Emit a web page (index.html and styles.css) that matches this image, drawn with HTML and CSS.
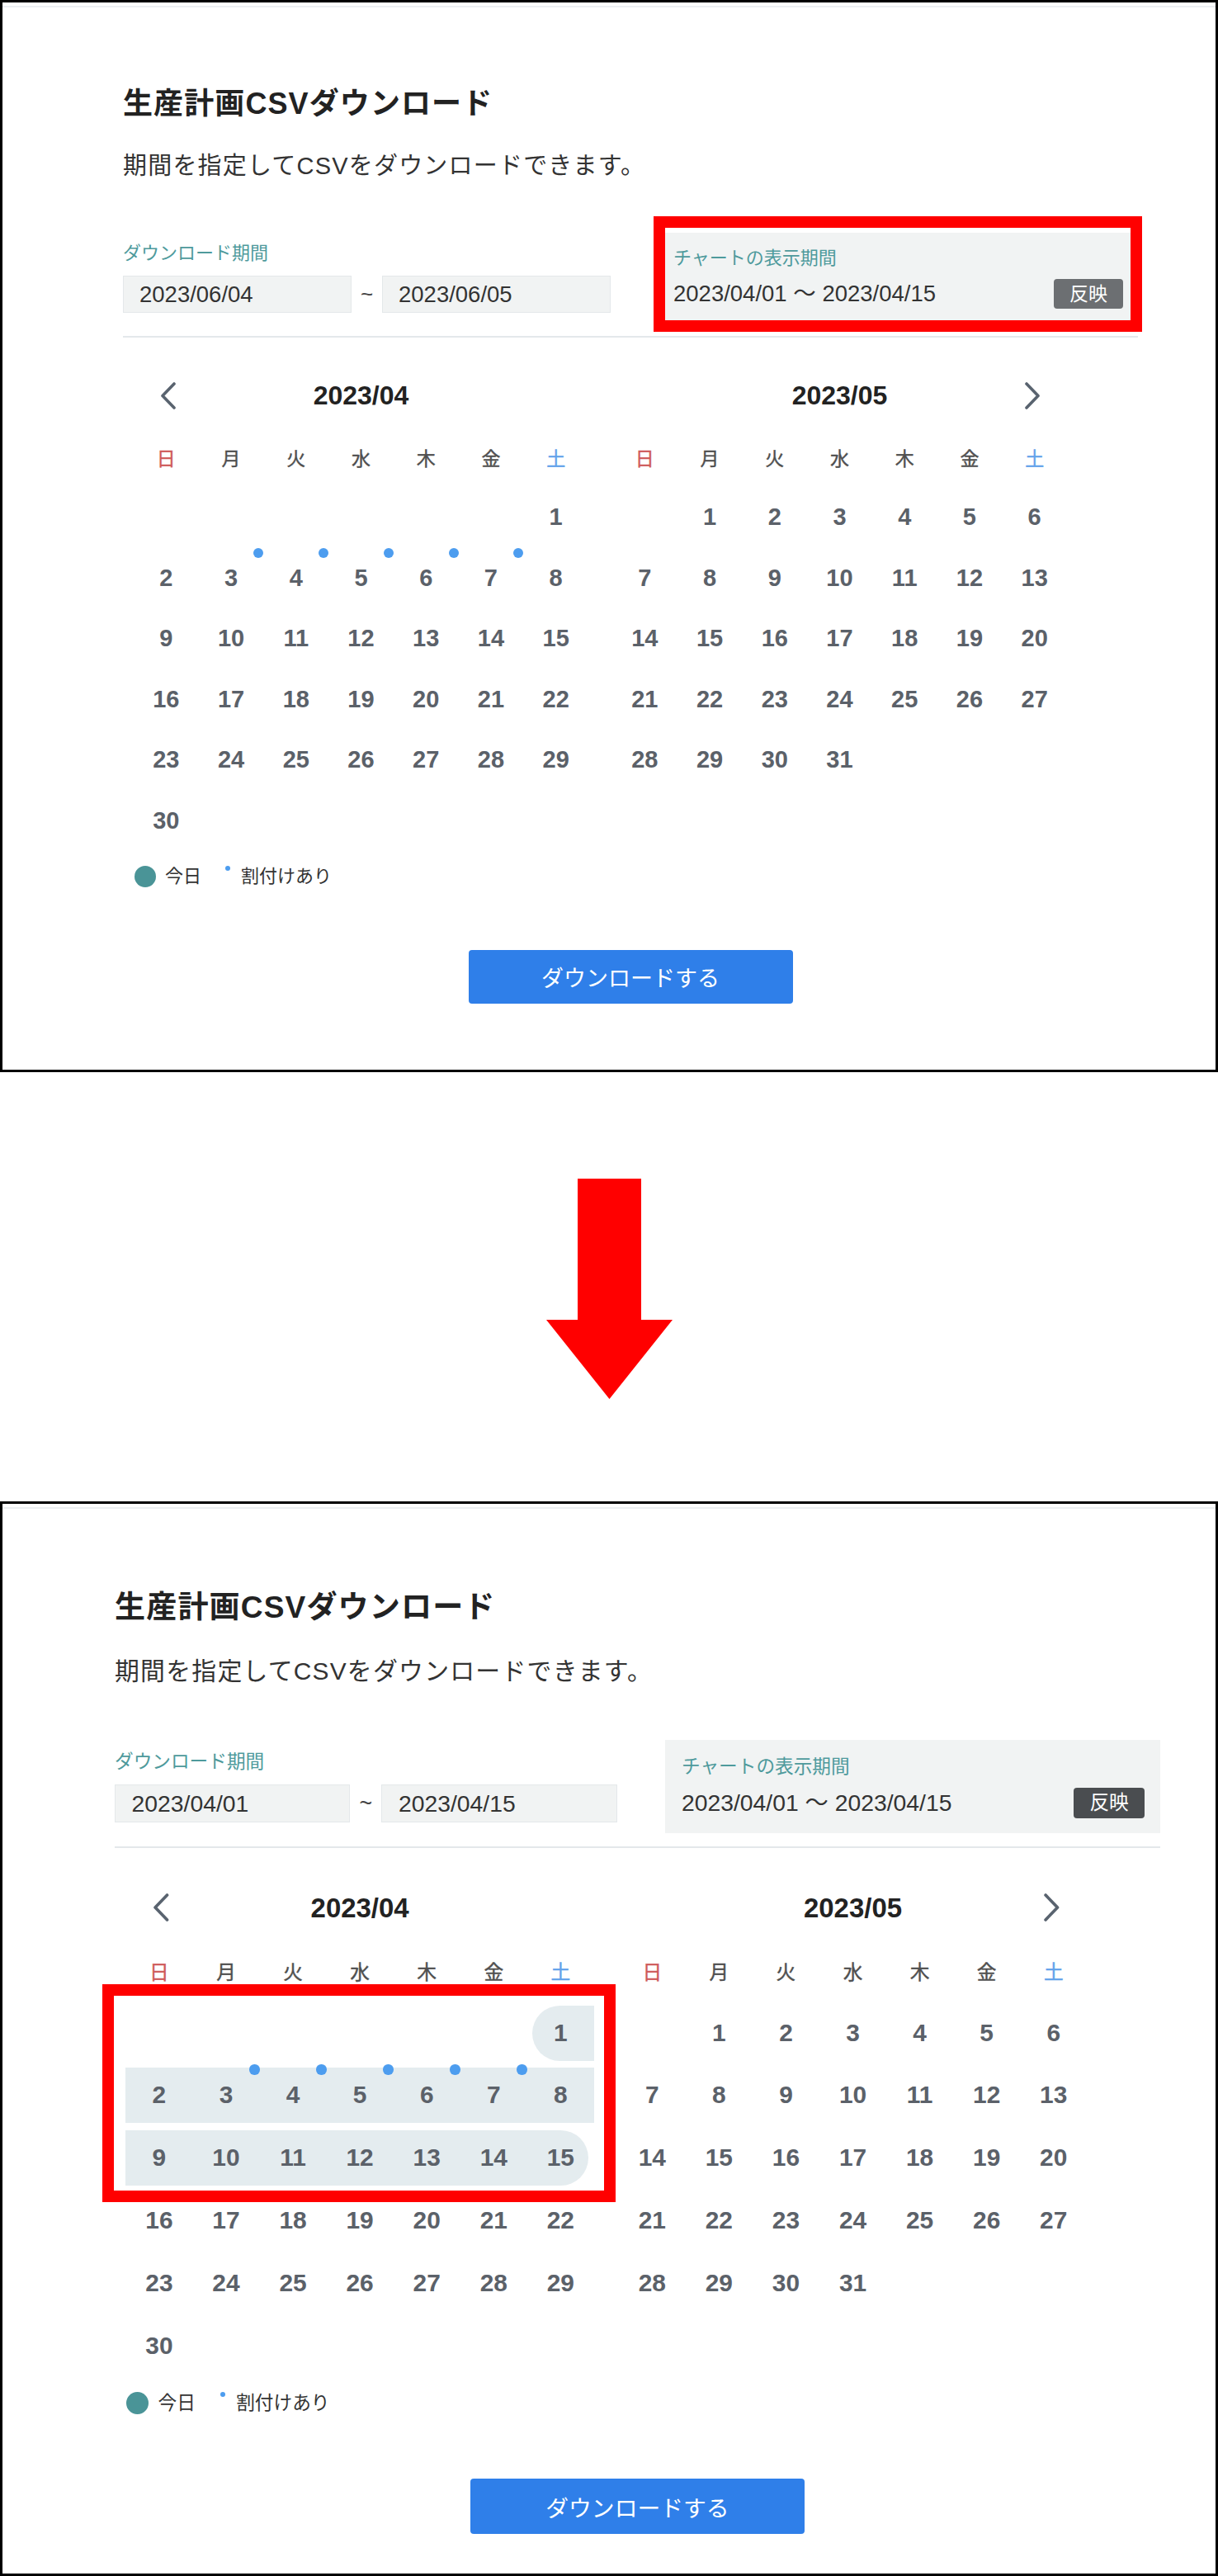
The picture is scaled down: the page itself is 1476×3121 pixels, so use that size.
FILE: index.html
```html
<!DOCTYPE html>
<html lang="ja">
<head>
<meta charset="utf-8">
<title>生産計画CSVダウンロード</title>
<link rel="stylesheet" href="styles.css">
</head>
<body>
<section class="panel panel--before">
  <div class="ui">
    <h1 class="title">生産計画CSVダウンロード</h1>
    <p class="lead">期間を指定してCSVをダウンロードできます。</p>
    <div class="period-row">
      <div class="period">
        <div class="label">ダウンロード期間</div>
        <div class="inputs">
          <div class="input">2023/06/04</div>
          <span class="tilde">~</span>
          <div class="input">2023/06/05</div>
        </div>
      </div>
      <div class="chart">
        <div class="label">チャートの表示期間</div>
        <div class="chart-row">
          <span class="chart-range">2023/04/01 〜 2023/04/15</span>
          <button class="apply">反映</button>
        </div>
        <div class="mark mark--chart"></div>
      </div>
    </div>
    <hr class="divider">
    <div class="calendars">
      <div class="month">
        <div class="month-head">
          <svg class="nav" viewBox="0 0 20 33"><polyline points="17,2 3,16.5 17,31" fill="none" stroke="#59636f" stroke-width="3.6" stroke-linecap="round" stroke-linejoin="round"/></svg>
          <span class="month-title">2023/04</span>
          <span class="nav"></span>
        </div>
        <div class="weekdays"><span class="sun">日</span><span>月</span><span>火</span><span>水</span><span>木</span><span>金</span><span class="sat">土</span></div>
        <div class="days">
          <div class="day"></div><div class="day"></div><div class="day"></div><div class="day"></div><div class="day"></div><div class="day"></div><div class="day">1</div>
          <div class="day">2</div><div class="day">3<i class="dot"></i></div><div class="day">4<i class="dot"></i></div><div class="day">5<i class="dot"></i></div><div class="day">6<i class="dot"></i></div><div class="day">7<i class="dot"></i></div><div class="day">8</div>
          <div class="day">9</div><div class="day">10</div><div class="day">11</div><div class="day">12</div><div class="day">13</div><div class="day">14</div><div class="day">15</div>
          <div class="day">16</div><div class="day">17</div><div class="day">18</div><div class="day">19</div><div class="day">20</div><div class="day">21</div><div class="day">22</div>
          <div class="day">23</div><div class="day">24</div><div class="day">25</div><div class="day">26</div><div class="day">27</div><div class="day">28</div><div class="day">29</div>
          <div class="day">30</div>
        </div>
      </div>
      <div class="month">
        <div class="month-head">
          <span class="nav"></span>
          <span class="month-title">2023/05</span>
          <svg class="nav" viewBox="0 0 20 33"><polyline points="3,2 17,16.5 3,31" fill="none" stroke="#59636f" stroke-width="3.6" stroke-linecap="round" stroke-linejoin="round"/></svg>
        </div>
        <div class="weekdays"><span class="sun">日</span><span>月</span><span>火</span><span>水</span><span>木</span><span>金</span><span class="sat">土</span></div>
        <div class="days">
          <div class="day"></div><div class="day">1</div><div class="day">2</div><div class="day">3</div><div class="day">4</div><div class="day">5</div><div class="day">6</div>
          <div class="day">7</div><div class="day">8</div><div class="day">9</div><div class="day">10</div><div class="day">11</div><div class="day">12</div><div class="day">13</div>
          <div class="day">14</div><div class="day">15</div><div class="day">16</div><div class="day">17</div><div class="day">18</div><div class="day">19</div><div class="day">20</div>
          <div class="day">21</div><div class="day">22</div><div class="day">23</div><div class="day">24</div><div class="day">25</div><div class="day">26</div><div class="day">27</div>
          <div class="day">28</div><div class="day">29</div><div class="day">30</div><div class="day">31</div>
        </div>
      </div>
    </div>
    <div class="legend">
      <span class="legend-today">今日</span>
      <span class="legend-assign">割付けあり</span>
    </div>
    <div class="actions"><button class="download">ダウンロードする</button></div>
  </div>
</section>

<div class="arrow">
  <svg class="arrow-svg" viewBox="0 0 153 267"><polygon points="38,0 115,0 115,171 153,171 76.5,267 0,171 38,171" fill="#ff0000"/></svg>
</div>

<section class="panel panel--after">
  <div class="ui">
    <h1 class="title">生産計画CSVダウンロード</h1>
    <p class="lead">期間を指定してCSVをダウンロードできます。</p>
    <div class="period-row">
      <div class="period">
        <div class="label">ダウンロード期間</div>
        <div class="inputs">
          <div class="input">2023/04/01</div>
          <span class="tilde">~</span>
          <div class="input">2023/04/15</div>
        </div>
      </div>
      <div class="chart">
        <div class="label">チャートの表示期間</div>
        <div class="chart-row">
          <span class="chart-range">2023/04/01 〜 2023/04/15</span>
          <button class="apply">反映</button>
        </div>
      </div>
    </div>
    <hr class="divider">
    <div class="calendars">
      <div class="month">
        <div class="month-head">
          <svg class="nav" viewBox="0 0 20 33"><polyline points="17,2 3,16.5 17,31" fill="none" stroke="#59636f" stroke-width="3.6" stroke-linecap="round" stroke-linejoin="round"/></svg>
          <span class="month-title">2023/04</span>
          <span class="nav"></span>
        </div>
        <div class="weekdays"><span class="sun">日</span><span>月</span><span>火</span><span>水</span><span>木</span><span>金</span><span class="sat">土</span></div>
        <div class="days">
          <div class="day"></div><div class="day"></div><div class="day"></div><div class="day"></div><div class="day"></div><div class="day"></div><div class="day in start">1</div>
          <div class="day in">2</div><div class="day in">3<i class="dot"></i></div><div class="day in">4<i class="dot"></i></div><div class="day in">5<i class="dot"></i></div><div class="day in">6<i class="dot"></i></div><div class="day in">7<i class="dot"></i></div><div class="day in">8</div>
          <div class="day in">9</div><div class="day in">10</div><div class="day in">11</div><div class="day in">12</div><div class="day in">13</div><div class="day in">14</div><div class="day in end">15</div>
          <div class="day">16</div><div class="day">17</div><div class="day">18</div><div class="day">19</div><div class="day">20</div><div class="day">21</div><div class="day">22</div>
          <div class="day">23</div><div class="day">24</div><div class="day">25</div><div class="day">26</div><div class="day">27</div><div class="day">28</div><div class="day">29</div>
          <div class="day">30</div>
          <div class="mark mark--range"></div>
        </div>
      </div>
      <div class="month">
        <div class="month-head">
          <span class="nav"></span>
          <span class="month-title">2023/05</span>
          <svg class="nav" viewBox="0 0 20 33"><polyline points="3,2 17,16.5 3,31" fill="none" stroke="#59636f" stroke-width="3.6" stroke-linecap="round" stroke-linejoin="round"/></svg>
        </div>
        <div class="weekdays"><span class="sun">日</span><span>月</span><span>火</span><span>水</span><span>木</span><span>金</span><span class="sat">土</span></div>
        <div class="days">
          <div class="day"></div><div class="day">1</div><div class="day">2</div><div class="day">3</div><div class="day">4</div><div class="day">5</div><div class="day">6</div>
          <div class="day">7</div><div class="day">8</div><div class="day">9</div><div class="day">10</div><div class="day">11</div><div class="day">12</div><div class="day">13</div>
          <div class="day">14</div><div class="day">15</div><div class="day">16</div><div class="day">17</div><div class="day">18</div><div class="day">19</div><div class="day">20</div>
          <div class="day">21</div><div class="day">22</div><div class="day">23</div><div class="day">24</div><div class="day">25</div><div class="day">26</div><div class="day">27</div>
          <div class="day">28</div><div class="day">29</div><div class="day">30</div><div class="day">31</div>
        </div>
      </div>
    </div>
    <div class="legend">
      <span class="legend-today">今日</span>
      <span class="legend-assign">割付けあり</span>
    </div>
    <div class="actions"><button class="download">ダウンロードする</button></div>
  </div>
</section>
</body>
</html>
```

FILE: styles.css
```css
* { box-sizing: border-box; }

html, body {
  margin: 0;
  padding: 0;
  background: #fff;
}

body {
  width: 1476px;
  font-family: "Liberation Sans", "Noto Sans CJK JP", sans-serif;
  color: #333;
}

.panel {
  position: relative;
  height: 1299px;
  border: 3px solid #000;
  padding: 101px 0 0 146px;
  box-shadow: inset 0 4px 0 #fff, inset 0 6px 0 #eceff2;
}

.panel--after {
  height: 1302px;
  padding: 103px 0 0 136px;
}

.ui {
  width: 1230px;
}

.panel--after .ui {
  zoom: 1.03;
}

.title {
  margin: 0;
  font-size: 36px;
  line-height: 44px;
  font-weight: 700;
  color: #222;
  letter-spacing: 1.1px;
}

.lead {
  margin: 33px 0 0;
  font-size: 29px;
  line-height: 40px;
  color: #333;
  letter-spacing: 1.2px;
}

.period-row {
  display: flex;
  align-items: flex-start;
  margin-top: 61px;
}

.period {
  width: 591px;
  margin-top: 10px;
}

.label {
  font-size: 22px;
  line-height: 30px;
  color: #4e9a9c;
}

.inputs {
  display: flex;
  align-items: center;
  margin-top: 12px;
}

.input {
  width: 277px;
  height: 45px;
  background: #f1f3f3;
  border: 1px solid #e4e8ea;
  padding-left: 19px;
  font-size: 27.5px;
  line-height: 43px;
  color: #333;
}

.tilde {
  width: 37px;
  text-align: center;
  font-size: 26px;
  color: #444;
}

.chart {
  position: relative;
  flex: 1;
  height: 109px;
  margin-left: 57px;
  background: #f1f3f3;
  padding: 16px 18px 0 19px;
}

.chart-row {
  display: flex;
  align-items: center;
  justify-content: space-between;
  height: 36px;
  margin-top: 10px;
}

.chart-range {
  font-size: 27.5px;
  line-height: 36px;
  color: #333;
}

.apply {
  width: 84px;
  height: 36px;
  padding: 0;
  border: none;
  border-radius: 4px;
  background: #6c6f72;
  color: #fff;
  font-family: inherit;
  font-size: 23px;
  line-height: 36px;
}

.panel--after .apply {
  background: #4a4d50;
}

.divider {
  height: 2px;
  margin: 16px 0 0;
  border: 0;
  background: #e4e8eb;
}

.calendars {
  display: flex;
  align-items: flex-start;
  gap: 29px;
  margin: 50px 0 0 13px;
}

.month {
  width: 551px;
}

.month-head {
  display: flex;
  align-items: center;
  justify-content: space-between;
  height: 40px;
  padding: 0 32px;
}

.nav {
  display: block;
  width: 20px;
  height: 33px;
}

.month-title {
  font-size: 32px;
  line-height: 40px;
  font-weight: 700;
  color: #222;
}

.weekdays {
  display: grid;
  grid-template-columns: repeat(7, 1fr);
  height: 40px;
  margin-top: 37px;
  font-size: 23px;
  line-height: 40px;
  text-align: center;
  color: #4f4f4f;
  -webkit-text-stroke: 0.4px currentColor;
}

.sun { color: #cf5a5a; }
.sat { color: #62a2ea; }

.days {
  position: relative;
  display: grid;
  grid-template-columns: repeat(7, 1fr);
  grid-auto-rows: 65px;
  row-gap: 8.6px;
  margin-top: 18px;
}

.day {
  position: relative;
  z-index: 0;
  text-align: center;
  font-size: 29px;
  line-height: 65px;
  font-weight: 700;
  color: #5b6169;
}

.day.in::before {
  content: "";
  position: absolute;
  top: 0;
  bottom: 0;
  left: 0;
  right: 0;
  z-index: -1;
  background: #e4ecef;
}

.day.start::before {
  left: 6px;
  border-radius: 33px 0 0 33px;
}

.day.end::before {
  right: 7px;
  border-radius: 0 33px 33px 0;
}

.dot {
  position: absolute;
  top: -4px;
  right: 0;
  width: 12px;
  height: 12px;
  border-radius: 50%;
  background: #4d9def;
}

.legend {
  display: flex;
  align-items: center;
  height: 30px;
  margin: 20px 0 0 14px;
  font-size: 22px;
  line-height: 30px;
  color: #333;
}

.legend-today {
  display: flex;
  align-items: center;
}

.legend-today::before {
  content: "";
  width: 26px;
  height: 26px;
  margin-right: 11px;
  border-radius: 50%;
  background: #4a9497;
}

.legend-assign {
  display: flex;
  align-items: flex-start;
  margin-left: 29px;
}

.legend-assign::before {
  content: "";
  width: 6px;
  height: 6px;
  margin: 2px 13px 0 0;
  border-radius: 50%;
  background: #4d9def;
}

.actions {
  display: flex;
  justify-content: center;
  margin-top: 74px;
}

.download {
  width: 393px;
  height: 65px;
  border: none;
  border-radius: 4px;
  background: #2f7fe9;
  color: #fff;
  font-family: inherit;
  font-size: 27px;
}

.mark {
  position: absolute;
  border: 14px solid #ff0000;
  pointer-events: none;
}

.mark--chart {
  top: -20px;
  left: -5px;
  right: -5px;
  bottom: -11px;
}

.mark--range {
  top: -25px;
  left: -28px;
  width: 604px;
  height: 256px;
  border-width: 13.6px;
}

.arrow {
  display: flex;
  justify-content: center;
  height: 520px;
  padding-top: 129px;
}

.arrow-svg {
  display: block;
  width: 153px;
  height: 267px;
}
```
